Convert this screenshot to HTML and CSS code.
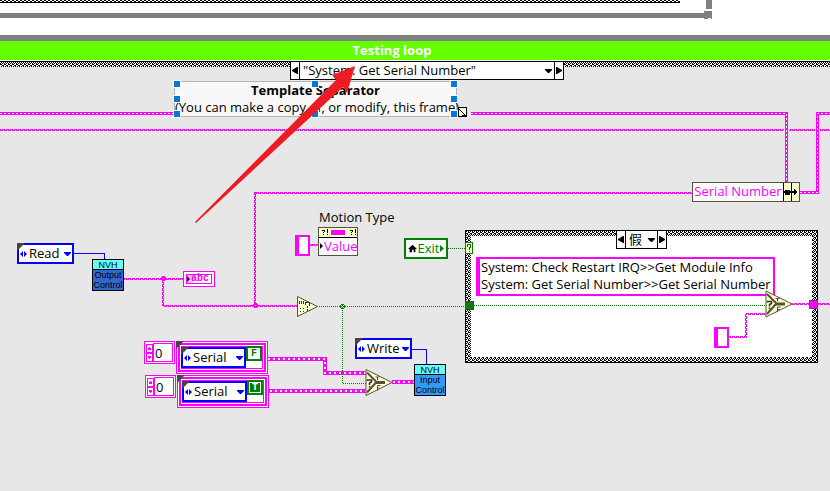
FILE: index.html
```
<!DOCTYPE html>
<html lang="en">
<head>
<meta charset="utf-8">
<title>Testing loop</title>
<link rel="stylesheet" href="styles.css">
</head>
<body>
<svg class="defs" aria-hidden="true">
  <defs>
    <pattern id="hatch" width="4" height="4" patternUnits="userSpaceOnUse"><path fill="#fff" d="M0 0h4v4H0z"/><path d="M0 0h2v1H0zM2 1h2v1H2zM1 2h1v1H1zM3 2h1v1H3zM0 3h1v1H0zM2 3h1v1H2z"/></pattern>
    <pattern id="str-h" width="4" height="2" patternUnits="userSpaceOnUse"><path fill="#f0f" d="M0 0h3v1H0zM2 1h2v1H2zM0 1h1v1H0z"/></pattern>
    <pattern id="str-v" width="2" height="4" patternUnits="userSpaceOnUse"><path fill="#f0f" d="M0 0h1v3H0zM1 2h1v2H1zM1 0h1v1H1z"/></pattern>
    <pattern id="arr" width="4" height="4" patternUnits="userSpaceOnUse"><path fill="#f0f" d="M0 0h4v4H0z"/></pattern>
    <symbol id="down" viewBox="0 0 7 4"><path d="M0 0h7v1L4 4H3L0 1z"/></symbol>
    <symbol id="lr" viewBox="0 0 7 6"><path d="M3 0v6L0 3zM4 0v6l3-3z"/></symbol>
    <symbol id="left" viewBox="0 0 6 7"><path d="M6 0v7H5L0 4V3L5 0z"/></symbol>
    <symbol id="right" viewBox="0 0 6 7"><path d="M0 0v7h1l5-3V3L1 0z"/></symbol>
    <symbol id="select" viewBox="0 0 28 28"><path d="M1 1v26l26-13z" fill="#ffc" stroke="#555040"/><path d="M2 4l9 9M2 24l9-10" fill="none" stroke="#555040" stroke-width="2"/><path d="M10 14h10" stroke="#555040" stroke-width="3"/><path d="M10.500 8.500h4M12.500 8.500v3M12.500 22v-5h3M12.500 19.500h2" fill="none" stroke="#555040"/><path d="M2.500 12.500v-1h4v2l-2 1v2M4.500 17.500v1.500" fill="none" stroke="#333" stroke-width="1.500"/></symbol>
  </defs>
</svg>

<header class="previous">
  <svg width="712" height="19" aria-hidden="true" shape-rendering="crispEdges"><path fill="url(#hatch)" d="M0 0h680v2H0z"/><path d="M0 2h680v1H0z"/><path fill="#808080" d="M0 13h704v-2h8v8h-1v-1h-3v1H704v-1H0zM706 0h6v9h-6z"/></svg>
</header>
<h1 class="loop-title">Testing loop</h1>

<main class="diagram">
  <svg class="wires" aria-hidden="true" shape-rendering="crispEdges">
    <g transform="translate(0 -61)">
      <path d="M0 61h4000v1H0z"/><path fill="url(#hatch)" d="M0 62h4000v5H0z"/>
      <path d="M465 230h353v133H465z"/><path fill="url(#hatch)" d="M466 231h351v131H466z"/><path fill="#fff" d="M471 236h341v121H471z"/>
      <g fill="none" stroke="#f0f" stroke-width="3">
        <path d="M0 113.500H174M471 113.500H786.500V182M800 192.500H817.500V113.500H4000"/>
        <path stroke="#fff" stroke-width="1" stroke-dasharray="2 2" d="M0 113.500H174M471 113.500H786.500V182M800 192.500H817.500V113.500H4000"/>
      </g>
      <path fill="url(#str-h)" d="M0 129h784v2H0zM789 129h26v2h-26zM820 129h4000v2H820zM255 192h437v2H255zM163 305h134v2H163zM124 278h60v2h-60zM310 244h8v2h-8zM792 303h20v2h-20zM818 303h4000v2H818zM746 313h20v2h-20zM729 336h18v2h-18zM758 294h8v2h-8z"/>
      <path fill="url(#str-v)" d="M254 192h2v114h-2zM162 278h2v28h-2zM745 313h2v24h-2z"/>
      <path fill="none" stroke="#f0f" stroke-width="4" d="M267 359H325V373H366M269 391H366M392 382H415"/>
      <path fill="none" stroke="#fff" stroke-width="2" stroke-dasharray="2 3" shape-rendering="auto" d="M268 359H325V373H366M270 391H366M393 382H415"/>
      <path fill="none" stroke="#00f" d="M73 253.500h31.500V260M412 349.500h14.500V364"/>
      <path fill="none" stroke="#008000" stroke-dasharray="1 1" d="M317 306.500H466M342.500 306V383.500H366M448 248.500h18M474 305.500h292"/>
      <path fill="#f0f" d="M162 276h3v1h1v3h-1v1h-3v-1h-1v-3h1zM254 303h3v1h1v3h-1v1h-3v-1h-1v-3h1z"/><path fill="#e7e7e7" d="M163 278h1v1h-1zM255 305h1v1h-1z"/>
      <path fill="#008000" d="M341 304h3v1h1v3h-1v1h-3v-1h-1v-3h1z"/><path fill="#e7e7e7" d="M341 305h1v1h-1zM343 305h1v1h-1zM342 306h1v1h-1zM341 307h1v1h-1zM343 307h1v1h-1z"/>
      <path fill="#fff" stroke="#f0f" stroke-width="2" d="M296 236h13v19h-13zM715 328h13v19h-13z"/><path fill="#f0f" d="M295 235h4v21h-4zM714 327h4v21h-4z"/>
      <path fill="#008000" stroke="#444" d="M465.500 301.500h8v8h-8z"/><path fill="#f0f" stroke="#555" d="M809.500 300.500h8v8h-8z"/>
      <path fill="#ffc" stroke="#008000" d="M465.500 242.500h7v11h-7z"/><path fill="none" stroke="#008000" d="M467.500 247v-2.500h3V247.500h-1.500V250M469 251v1"/>
      <path fill="#ffc" stroke="#555040" shape-rendering="auto" d="M297.500 296.500v20l20-10z"/><path stroke="#333" fill="none" d="M299.500 301v3M301.500 301v3M303.500 301v3M300 308.500h1M303 308.500h1M300 311.500h1M303 311.500h1M305.500 305v-2M305 302.500h4M309.500 303v3M307.500 306v2M307.500 309v2"/>
      <use href="#select" x="365" y="368" width="28" height="29" shape-rendering="auto"/>
    </g>
  </svg>

  <div class="case-bar case-main">
    <button type="button" aria-label="Previous case"><svg width="6" height="7"><use href="#left"/></svg></button>
    <label><select aria-label="Case"><option>"System: Get Serial Number"</option></select><svg width="7" height="4"><use href="#down"/></svg></label>
    <button type="button" aria-label="Next case"><svg width="6" height="7"><use href="#right"/></svg></button>
  </div>

  <section class="separator"><h2>Template Separator</h2><p>(You can make a copy of, or modify, this frame)</p></section>
  <svg class="handles" width="296" height="38" aria-hidden="true" shape-rendering="crispEdges"><path fill="#0078d7" stroke="#fff" d="M.5.500h7v7h-7zM.5 15.500h7v7h-7zM.5 30.500h7v7h-7zM138.500.500h7v7h-7zM138.500 30.500h7v7h-7zM277.500.500h7v7h-7zM277.500 15.500h7v7h-7zM277.500 30.500h7v7h-7z"/><path fill="#ffd" stroke="#000" d="M285.500 27.500h8v9h-8z"/><path fill="none" stroke="#000" d="M286 29l6 6M289 35.500h4.500V31" shape-rendering="auto"/></svg>

  <div class="bundle"><span>Serial Number</span><svg width="16" height="18" shape-rendering="crispEdges" aria-hidden="true"><path fill="#ffc" d="M0 0h16v18H0z"/><path d="M0 0h1v18H0zM8 0h1v18H8zM2 7h5v5H2zM1 8h13v2H1zM11 6h1v6h-1zM12 7h1v4h-1z"/></svg></div>

  <span class="caption motion">Motion Type</span>
  <div class="property"><svg width="38" height="9" shape-rendering="crispEdges" aria-hidden="true"><path fill="#ffc" d="M0 0h38v9H0z"/><path fill="#f0f" d="M12 2h14v5H12z"/><path fill="none" stroke="#000" d="M3 2.500h3M5.500 2v2M4.500 4v1M4.500 6v1M8.500 1v4M8.500 6v1M31 2.500h3M33.500 2v2M32.500 4v1M32.500 6v1M36.500 1v4M36.500 6v1"/></svg><span>Value</span></div>

  <div class="local"><svg width="9" height="9" viewBox="0 0 11 9" aria-hidden="true"><path d="M5.500 0L0 5h2v4h3V6h2v3h2V5h2z"/></svg><span>Exit</span><svg width="4" height="7" aria-hidden="true"><path fill="#008000" d="M0 0l4 3.500L0 7z"/></svg></div>

  <label class="enum read"><svg width="7" height="6"><use href="#lr"/></svg><select aria-label="Output mode"><option>Read</option></select><svg width="7" height="4"><use href="#down"/></svg></label>
  <div class="vi output"><b>NVH</b><span>Output<br>Control</span></div>
  <div class="indicator"><span>abc</span></div>

  <div class="array first">
    <div class="index"><svg width="7" height="18" shape-rendering="crispEdges" aria-hidden="true"><path fill="none" stroke="#f0f" d="M.5.500h6v8h-6zM.5 9.500h6v8h-6z"/><path fill="#f0f" d="M3 3h1v1h1v2H2V4h1zM2 12h3v2h-1v1h-1v-1h-1z"/></svg><input aria-label="First index" value="0"></div>
    <div class="cluster"><label class="enum"><svg width="7" height="6"><use href="#lr"/></svg><select aria-label="First type"><option>Serial</option></select><svg width="7" height="4"><use href="#down"/></svg></label><b class="bool off">F</b></div>
  </div>
  <div class="array second">
    <div class="index"><svg width="7" height="18" shape-rendering="crispEdges" aria-hidden="true"><path fill="none" stroke="#f0f" d="M.5.500h6v8h-6zM.5 9.500h6v8h-6z"/><path fill="#f0f" d="M3 3h1v1h1v2H2V4h1zM2 12h3v2h-1v1h-1v-1h-1z"/></svg><input aria-label="Second index" value="0"></div>
    <div class="cluster"><label class="enum"><svg width="7" height="6"><use href="#lr"/></svg><select aria-label="Second type"><option>Serial</option></select><svg width="7" height="4"><use href="#down"/></svg></label><b class="bool on">T</b></div>
  </div>

  <label class="enum write"><svg width="7" height="6"><use href="#lr"/></svg><select aria-label="Input mode"><option>Write</option></select><svg width="7" height="4"><use href="#down"/></svg></label>
  <div class="vi input"><b>NVH</b><span>Input<br>Control</span></div>

  <div class="case-bar case-inner">
    <button type="button" aria-label="Previous inner case"><svg width="6" height="7"><use href="#left"/></svg></button>
    <label><select aria-label="Inner case" lang="zh"><option>假</option></select><svg width="7" height="4"><use href="#down"/></svg></label>
    <button type="button" aria-label="Next inner case"><svg width="6" height="7"><use href="#right"/></svg></button>
  </div>
  <p class="constant">System: Check Restart IRQ&gt;&gt;Get Module Info<br>System: Get Serial Number&gt;&gt;Get Serial Number</p>
  <svg class="inner-select" width="28" height="28" aria-hidden="true"><use href="#select"/></svg>

  <svg class="pointer" width="162" height="160" aria-hidden="true"><path fill="#ed1c24" d="M160 1L137 10l4 5L0 157l1 1L148 22l4 6z"/></svg>
</main>
</body>
</html>
```
FILE: styles.css
```
* { box-sizing: border-box; }
body {
  margin: 0;
  min-height: 100vh;
  display: flex;
  flex-direction: column;
  overflow: hidden;
  background: #e7e7e7;
  color: #000;
  font: 13px/17px "Open Sans", "Noto Sans CJK SC", sans-serif;
}
h1, h2, p { margin: 0; }
svg { display: block; flex: none; }
.defs { position: absolute; width: 0; height: 0; }
.previous { height: 35px; background: #fff; }
.loop-title {
  height: 26px;
  padding-right: 46px;
  border-top: 6px solid #808080;
  border-bottom: 1px solid #fff;
  background: #6f0;
  color: #fff;
  font-size: 13px;
  line-height: 19px;
  text-align: center;
}
.diagram { position: relative; flex: 1; min-height: 430px; overflow: hidden; }
.diagram > * { position: absolute; }
.wires { left: 0; top: 0; width: 100%; height: 100%; }

select, input, button {
  appearance: none;
  margin: 0;
  padding: 0;
  border: 0;
  border-radius: 0;
  background: none;
  color: inherit;
  font: inherit;
}
select { flex: 1; min-width: 0; }

.case-bar { display: flex; height: 19px; border: 1px solid #000; background: #fff; }
.case-bar button { width: 8px; display: flex; align-items: center; justify-content: center; }
.case-bar label {
  flex: 1;
  min-width: 0;
  display: flex;
  align-items: center;
  padding: 0 2px 0 3px;
  border: solid #000;
  border-width: 0 1px;
}
.case-main { left: 290px; top: 0; width: 274px; }
.case-inner { left: 616px; top: 169px; width: 51px; }

.separator {
  left: 174px;
  top: 20px;
  width: 283px;
  height: 36px;
  border: 1px solid #b4b4b4;
  background: #f8f8f8;
  text-align: center;
  white-space: nowrap;
}
.separator h2 { font-size: 13px; line-height: 17px; }
.handles { left: 173px; top: 19px; }

.bundle {
  left: 692px;
  top: 121px;
  height: 20px;
  display: flex;
  border: 1px solid #555040;
  background: #fff;
  color: #f0f;
}
.bundle span { width: 90px; text-align: center; white-space: nowrap; }
.motion { left: 319px; top: 148px; white-space: nowrap; }
.property { left: 318px; top: 166px; width: 40px; border: 1px solid #555040; background: #fff; color: #f0f; }
.property span { display: block; height: 18px; padding-left: 5px; border-top: 1px solid #000; position: relative; }
.property span::before {
  content: "";
  position: absolute;
  left: 1px;
  top: 5px;
  border: 3px solid transparent;
  border-left-color: #000;
  border-right: 0;
}
.local {
  left: 404px;
  top: 177px;
  width: 44px;
  height: 21px;
  display: flex;
  align-items: center;
  justify-content: space-between;
  padding: 0 2px;
  border: 2px solid #008000;
  background: #fff;
  color: #008000;
}

.enum {
  position: relative;
  display: flex;
  align-items: center;
  width: 57px;
  height: 21px;
  padding: 0 1px;
  gap: 2px;
  border: 2px solid #00f;
  background: #fff;
}
.enum svg { fill: #00f; }
.enum::before, .cluster::before {
  content: "";
  position: absolute;
  left: -2px;
  top: -2px;
  border: 4px solid #444;
  border-right-color: transparent;
  border-bottom-color: transparent;
}
.diagram > .enum { position: absolute; }
.read { left: 17px; top: 182px; }
.write { left: 355px; top: 277px; }

.vi {
  width: 32px;
  height: 32px;
  border: 1px solid #000;
  text-align: center;
  font: 9px/10px "Liberation Sans", sans-serif;
}
.vi b { display: block; height: 10px; border-bottom: 1px solid #000; background: #6ff; font-weight: 400; line-height: 10px; }
.vi span { display: block; }
.output { left: 92px; top: 198px; background: #36c; }
.input { left: 414px; top: 303px; background: #39f; }
.indicator { left: 183px; top: 210px; width: 32px; height: 16px; padding: 2px; border: 1px solid #f0f; background: #fff; }
.indicator span {
  display: block;
  height: 10px;
  border: 1px solid #f0f;
  padding-left: 2px;
  background: linear-gradient(90deg, #fbf 6px, #fff 6px);
  color: #f0f;
  text-align: center;
  font: bold 10px/8px "Liberation Mono", monospace;
}
.indicator::before {
  content: "";
  position: absolute;
  left: 3px;
  top: 4px;
  border: 3px solid transparent;
  border-left-color: #000;
  border-right: 0;
}

.array { display: flex; gap: 1px; }
.first { left: 144px; top: 280px; }
.second { left: 145px; top: 314px; }
.index {
  display: flex;
  align-items: center;
  width: 31px;
  height: 23px;
  padding: 0 1px;
  border: 1px solid #f0f;
  background: #fff;
}
.index input { width: 20px; height: 19px; padding-left: 1px; border: 1px solid #f0f; }
.cluster {
  position: relative;
  display: flex;
  width: 92px;
  height: 33px;
  padding: 1px;
  border: 1px solid #f0f;
  background: #fff;
}
.cluster::before { left: -1px; top: -1px; z-index: 1; }
.cluster::after { content: ""; position: absolute; inset: 1px; border: 2px solid #f0f; box-shadow: inset 0 0 0 1px #fff, inset 0 0 0 2px #f0f; pointer-events: none; }
.cluster .enum { width: 65px; margin: 4px 0 0 3px; z-index: 1; }
.bool { width: 16px; height: 15px; margin: 3px 0 0; border: 2px solid #008000; color: #008000; font: bold 10px/11px "Liberation Mono", monospace; text-align: center; z-index: 1; }
.on { background: #008000; color: #fff; box-shadow: inset 0 0 0 1px #fff; }

.constant {
  left: 476px;
  top: 196px;
  padding: 0 2px 1px 1px;
  border: 2px solid #f0f;
  border-left-width: 4px;
  background: #fff;
  white-space: nowrap;
}
.inner-select { left: 765px; top: 229px; }
.pointer { left: 195px; top: 4px; }
```
